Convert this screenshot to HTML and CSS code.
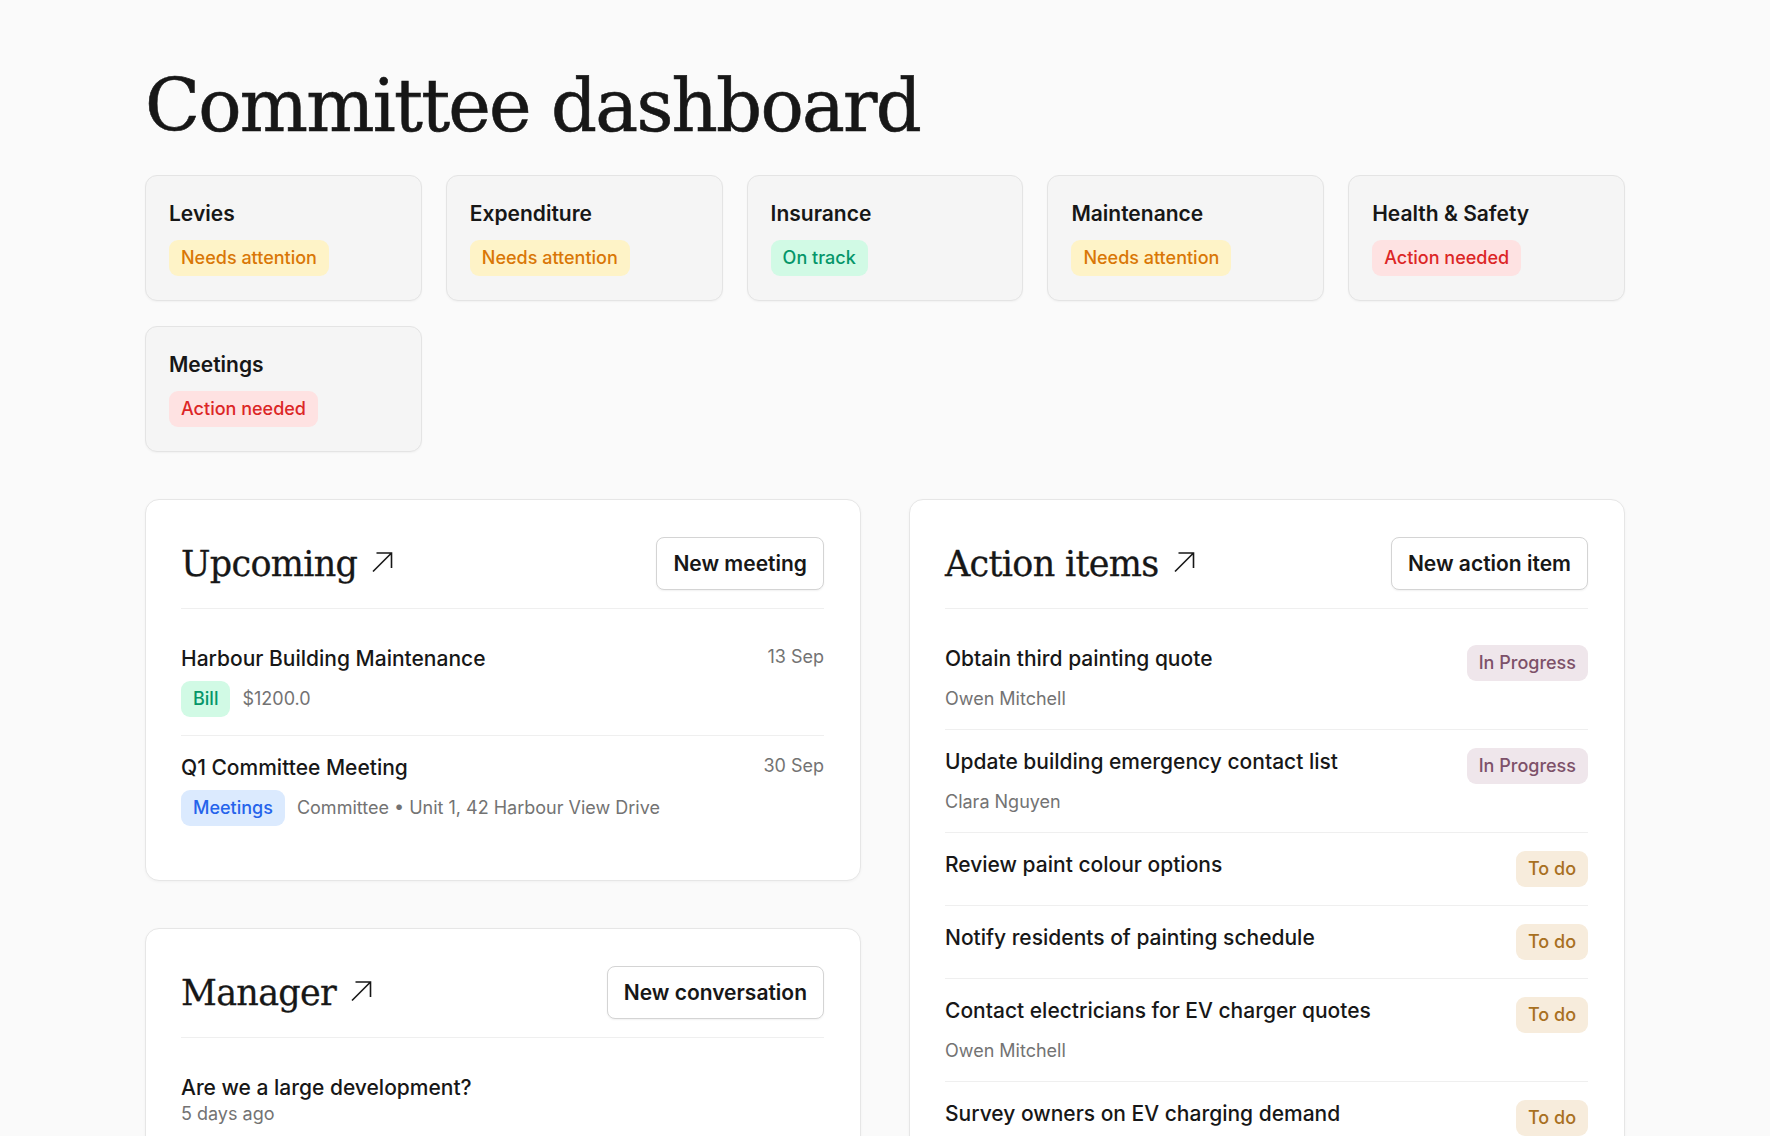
FILE: index.html
```html
<!DOCTYPE html>
<html lang="en">
<head>
<meta charset="utf-8">
<title>Committee dashboard</title>
<link rel="stylesheet" href="styles.css">
</head>
<body>
<main class="page">
  <h1 class="page-title">Committee dashboard</h1>

  <section class="status-grid">
    <div class="status-card"><h3 class="status-title">Levies</h3><span class="pill pill-amber">Needs attention</span></div>
    <div class="status-card"><h3 class="status-title">Expenditure</h3><span class="pill pill-amber">Needs attention</span></div>
    <div class="status-card"><h3 class="status-title">Insurance</h3><span class="pill pill-green">On track</span></div>
    <div class="status-card"><h3 class="status-title">Maintenance</h3><span class="pill pill-amber">Needs attention</span></div>
    <div class="status-card"><h3 class="status-title">Health &amp; Safety</h3><span class="pill pill-red">Action needed</span></div>
    <div class="status-card"><h3 class="status-title">Meetings</h3><span class="pill pill-red">Action needed</span></div>
  </section>

  <section class="panels">
    <div class="col">
      <article class="panel">
        <header class="panel-head">
          <a class="panel-link" href="#"><h2 class="panel-title">Upcoming</h2>
            <svg class="arrow" viewBox="0 0 22 22" width="22" height="22"><path d="M2 20.5 L20.5 2 M5.5 2 H20.5 V17" fill="none" stroke="currentColor" stroke-width="1.6"/></svg></a>
          <button class="btn">New meeting</button>
        </header>
        <ul class="list">
          <li class="item">
            <div class="row"><span class="item-title">Harbour Building Maintenance</span><span class="date">13 Sep</span></div>
            <div class="meta"><span class="pill pill-green">Bill</span><span class="muted">$1200.0</span></div>
          </li>
          <li class="item">
            <div class="row"><span class="item-title">Q1 Committee Meeting</span><span class="date">30 Sep</span></div>
            <div class="meta"><span class="pill pill-blue">Meetings</span><span class="muted">Committee • Unit 1, 42 Harbour View Drive</span></div>
          </li>
        </ul>
      </article>

      <article class="panel">
        <header class="panel-head">
          <a class="panel-link" href="#"><h2 class="panel-title">Manager</h2>
            <svg class="arrow" viewBox="0 0 22 22" width="22" height="22"><path d="M2 20.5 L20.5 2 M5.5 2 H20.5 V17" fill="none" stroke="currentColor" stroke-width="1.6"/></svg></a>
          <button class="btn">New conversation</button>
        </header>
        <ul class="list">
          <li class="item">
            <div class="item-title">Are we a large development?</div>
            <div class="muted">5 days ago</div>
          </li>
        </ul>
      </article>
    </div>

    <div class="col">
      <article class="panel">
        <header class="panel-head">
          <a class="panel-link" href="#"><h2 class="panel-title">Action items</h2>
            <svg class="arrow" viewBox="0 0 22 22" width="22" height="22"><path d="M2 20.5 L20.5 2 M5.5 2 H20.5 V17" fill="none" stroke="currentColor" stroke-width="1.6"/></svg></a>
          <button class="btn">New action item</button>
        </header>
        <ul class="list">
          <li class="item">
            <div class="row tall"><span class="item-title">Obtain third painting quote</span><span class="pill pill-mauve">In Progress</span></div>
            <div class="muted sub">Owen Mitchell</div>
          </li>
          <li class="item">
            <div class="row tall"><span class="item-title">Update building emergency contact list</span><span class="pill pill-mauve">In Progress</span></div>
            <div class="muted sub">Clara Nguyen</div>
          </li>
          <li class="item">
            <div class="row tall"><span class="item-title">Review paint colour options</span><span class="pill pill-tan">To do</span></div>
          </li>
          <li class="item">
            <div class="row tall"><span class="item-title">Notify residents of painting schedule</span><span class="pill pill-tan">To do</span></div>
          </li>
          <li class="item">
            <div class="row tall"><span class="item-title">Contact electricians for EV charger quotes</span><span class="pill pill-tan">To do</span></div>
            <div class="muted sub">Owen Mitchell</div>
          </li>
          <li class="item">
            <div class="row tall"><span class="item-title">Survey owners on EV charging demand</span><span class="pill pill-tan">To do</span></div>
          </li>
        </ul>
      </article>
    </div>
  </section>
</main>
</body>
</html>
```

FILE: styles.css
```css
* { box-sizing: border-box; }

body {
  margin: 0;
  background: #fafafa;
  color: #171717;
  font-family: Inter, "Noto Sans", "Liberation Sans", sans-serif;
}

.page {
  width: 1480px;
  margin: 0 auto;
  padding: 70px 0 80px;
}

.page-title {
  margin: 0 0 33px;
  font-family: "DejaVu Serif", "Liberation Serif", serif;
  font-weight: 400;
  font-size: 72px;
  line-height: 72px;
  letter-spacing: -1.8px;
  color: #171717;
  -webkit-text-stroke: 0.6px #171717;
}

.status-grid {
  display: grid;
  grid-template-columns: repeat(5, 1fr);
  gap: 25px 24px;
}

.status-card {
  background: #f5f5f5;
  border: 1px solid #e4e4e4;
  border-radius: 12px;
  padding: 24px 23px 24px;
  box-shadow: 0 1px 2px rgba(0,0,0,0.04);
  display: flex;
  flex-direction: column;
  align-items: flex-start;
  gap: 12px;
}

.status-title {
  margin: 0;
  font-size: 21px;
  line-height: 28px;
  font-weight: 600;
  color: #171717;
}

.pill {
  display: inline-flex;
  align-items: center;
  height: 36px;
  padding: 0 12px;
  border-radius: 9px;
  font-size: 18px;
  font-weight: 500;
  line-height: 24px;
  white-space: nowrap;
  flex-shrink: 0;
}
.pill-amber { background: #fef3c7; color: #d97706; }
.pill-green { background: #d1fae5; color: #059669; }
.pill-red { background: #fee2e2; color: #dc2626; }
.pill-blue { background: #dbeafe; color: #2563eb; }
.pill-mauve { background: #efe6eb; color: #7d5169; }
.pill-tan { background: #f7ecdc; color: #a8701f; }

.panels {
  margin-top: 47px;
  display: grid;
  grid-template-columns: 1fr 1fr;
  gap: 48px;
  align-items: start;
}

.col {
  display: flex;
  flex-direction: column;
  gap: 47px;
}

.panel {
  background: #ffffff;
  border: 1px solid #e6e6e6;
  border-radius: 14px;
  padding: 37px 36px 36px 35px;
  box-shadow: 0 1px 3px rgba(0,0,0,0.04);
}

.panel-head {
  display: flex;
  align-items: center;
  justify-content: space-between;
  padding-bottom: 18px;
  border-bottom: 1px solid #efefef;
}

.panel-link {
  display: inline-flex;
  align-items: center;
  gap: 14px;
  color: #171717;
  text-decoration: none;
}

.panel-title {
  margin: 0;
  font-family: "DejaVu Serif", "Liberation Serif", serif;
  font-weight: 400;
  font-size: 35px;
  line-height: 42px;
  letter-spacing: -0.7px;
  -webkit-text-stroke: 0.3px #171717;
}

.arrow {
  display: block;
  margin-top: -4px;
}

.btn {
  height: 53px;
  padding: 0 16px;
  background: #ffffff;
  border: 1px solid #d4d4d4;
  border-radius: 8px;
  box-shadow: 0 1px 2px rgba(0,0,0,0.06);
  font-family: Inter, "Noto Sans", "Liberation Sans", sans-serif;
  font-size: 21px;
  font-weight: 600;
  color: #171717;
}

.list {
  list-style: none;
  margin: 18px 0 0;
  padding: 0;
}

.item {
  padding: 18px 0;
  border-bottom: 1px solid #efefef;
}
.item:last-child { border-bottom: none; }

.row {
  display: flex;
  justify-content: space-between;
  align-items: flex-start;
  gap: 16px;
}
.row.tall { min-height: 36px; }

.item-title {
  font-size: 21px;
  line-height: 28px;
  font-weight: 500;
  color: #171717;
}

.date {
  font-size: 18px;
  line-height: 24px;
  color: #737373;
}

.meta {
  margin-top: 8px;
  display: flex;
  align-items: center;
  gap: 12px;
}

.muted {
  font-size: 18px;
  line-height: 24px;
  color: #737373;
}

.sub { margin-top: 6px; }
```
